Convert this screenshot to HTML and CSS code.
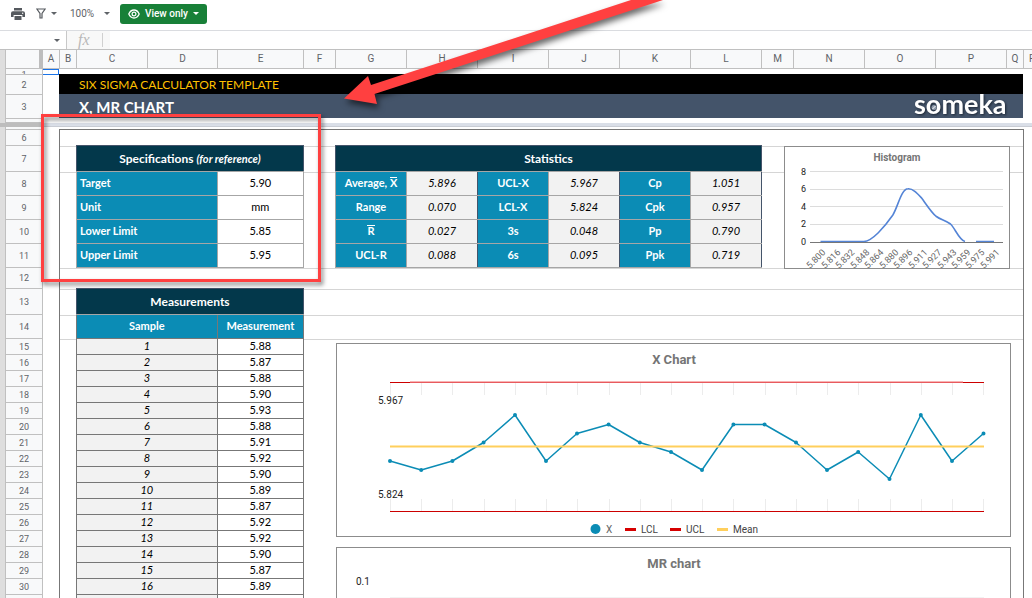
FILE: index.html
```html
<!DOCTYPE html>
<html lang="en">
<head>
<meta charset="utf-8">
<title>Six Sigma Calculator Template</title>
<link rel="stylesheet" href="styles.css">
</head>
<body>
<header class="toolbar">
  <button class="tool" type="button" aria-label="Print">
    <svg width="14" height="12" viewBox="0 0 14 12"><path fill="#55595e" d="M3 0h8v2.4H3zM2 3.2h10a2 2 0 0 1 2 2V9h-2.600V7H2.600v2H0V5.200a2 2 0 0 1 2-2zM3.500 8h7v4h-7z"/><circle cx="11.700" cy="5.200" r=".7" fill="#fff"/></svg>
  </button>
  <button class="tool tool-filter" type="button" aria-label="Filter">
    <svg width="10" height="11" viewBox="0 0 10 11"><path fill="none" stroke="#55595e" stroke-width="1.200" d="M.9 1h8.200L6 5.500V10H4V5.500z"/></svg>
    <span class="caret"></span>
  </button>
  <div class="zoom"><select class="zoom-select" aria-label="Zoom"><option>100%</option></select><span class="caret"></span></div>
  <button class="view-only" type="button">
    <svg width="12" height="10" viewBox="0 0 12 10"><path fill="none" stroke="#fff" stroke-width="1.300" d="M.8 5C2 2.300 3.800 1 6 1s4 1.300 5.200 4C10 7.700 8.200 9 6 9S2 7.700.8 5z"/><circle cx="6" cy="5" r="1.900" fill="none" stroke="#fff" stroke-width="1.200"/></svg>
    View only
    <span class="caret"></span>
  </button>
</header>
<div class="formula-bar">
  <div class="name-box"><input class="name-input" type="text" aria-label="Name box"><span class="caret"></span></div>
  <div class="fx-box"><label class="fx" for="formula">fx</label></div>
  <input class="formula-input" id="formula" type="text">
</div>

<main class="sheet">
  <div class="gutter"></div>
  <div class="corner"></div>
  <div class="col">A</div><div class="col">B</div><div class="col">C</div><div class="col">D</div><div class="col">E</div><div class="col">F</div><div class="col">G</div><div class="col">H</div><div class="col">I</div><div class="col">J</div><div class="col">K</div><div class="col">L</div><div class="col">M</div><div class="col">N</div><div class="col">O</div><div class="col">P</div><div class="col">Q</div><div class="col col-last">R</div>

  <div class="row row-clipped">1</div><div class="row">2</div><div class="row">3</div><div class="row"></div>
  <div class="row freeze-head"></div>
  <div class="row"></div><div class="row">6</div><div class="row">7</div><div class="row">8</div><div class="row">9</div><div class="row">10</div><div class="row">11</div><div class="row">12</div><div class="row">13</div><div class="row">14</div><div class="row">15</div><div class="row">16</div><div class="row">17</div><div class="row">18</div><div class="row">19</div><div class="row">20</div><div class="row">21</div><div class="row">22</div><div class="row">23</div><div class="row">24</div><div class="row">25</div><div class="row">26</div><div class="row">27</div><div class="row">28</div><div class="row">29</div><div class="row">30</div><div class="row"></div>

  <div class="selected-cell"></div>
  <div class="banner">
    <div class="banner-top">SIX SIGMA CALCULATOR TEMPLATE</div>
    <div class="banner-main">
      <h1 class="banner-title">X, MR CHART</h1>
      <svg class="brand" width="96" height="24" viewBox="0 0 96 24" role="img" aria-label="someka">
        <text x="4" y="20" class="brand-text">someka</text>
        <circle cx="24" cy="13.500" r="2.500" fill="#8f9bab"/><path d="M22.500 15l3-3" stroke="#fff" stroke-width="1"/>
      </svg>
    </div>
  </div>
  <div class="freeze-bar"></div>

  <div class="panel"></div>
  <div class="gridline line-7"></div><div class="gridline line-8"></div><div class="gridline line-12"></div><div class="gridline line-13"></div><div class="gridline line-14"></div><div class="gridline line-15"></div>

  <div class="area area-specs">
    <table class="grid-table specs">
      <colgroup><col class="w-label"><col></colgroup>
      <thead><tr><th colspan="2" scope="colgroup">Specifications <em class="note">(for reference)</em></th></tr></thead>
      <tbody>
        <tr><th scope="row">Target</th><td>5.90</td></tr>
        <tr><th scope="row">Unit</th><td>mm</td></tr>
        <tr><th scope="row">Lower Limit</th><td>5.85</td></tr>
        <tr><th scope="row">Upper Limit</th><td>5.95</td></tr>
      </tbody>
    </table>
  </div>

  <div class="area area-stats">
    <table class="grid-table stats">
      <thead><tr><th colspan="6" scope="colgroup">Statistics</th></tr></thead>
      <tbody>
        <tr><th scope="row">Average, <span class="bar">X</span></th><td>5.896</td><th scope="row">UCL-X</th><td>5.967</td><th scope="row">Cp</th><td>1.051</td></tr>
        <tr><th scope="row">Range</th><td>0.070</td><th scope="row">LCL-X</th><td>5.824</td><th scope="row">Cpk</th><td>0.957</td></tr>
        <tr><th scope="row"><span class="bar">R</span></th><td>0.027</td><th scope="row">3s</th><td>0.048</td><th scope="row">Pp</th><td>0.790</td></tr>
        <tr><th scope="row">UCL-R</th><td>0.088</td><th scope="row">6s</th><td>0.095</td><th scope="row">Ppk</th><td>0.719</td></tr>
      </tbody>
    </table>
  </div>

  <div class="area-histogram">
    <div class="chart">
    <svg class="plot" viewBox="0 0 224 121">
      <text class="chart-title small" x="112" y="14">Histogram</text>
      <g stroke="#dcdcdc"><path d="M25 24.500h193M25 42.500h193M25 59.500h193M25 77.500h193"/></g>
      <g class="tick end"><text x="21" y="28">8</text><text x="21" y="45">6</text><text x="21" y="63">4</text><text x="21" y="80">2</text><text x="21" y="98">0</text></g>
      <path fill="none" stroke="#5484d6" stroke-width="1.600" d="M35.500 94.500H78.800C83 94.500 89 90 93.300 85.750C98 81 103 75 107.700 68.250C113 60 116 42 123 41.800C128 41.500 132 46 136.600 51C141 57 146 65 151 69.250C156 73 160 73 165.500 77C170 81 174 93 180 94.500M191 94.500H209"/>
      <path stroke="#777" d="M25 95.500h193"/>
      <g class="tick end soft">
        <text transform="translate(41 106) rotate(-45)">5.800</text><text transform="translate(56 106) rotate(-45)">5.816</text><text transform="translate(70 106) rotate(-45)">5.832</text><text transform="translate(85 106) rotate(-45)">5.848</text><text transform="translate(99 106) rotate(-45)">5.864</text><text transform="translate(114 106) rotate(-45)">5.880</text><text transform="translate(128 106) rotate(-45)">5.896</text><text transform="translate(143 106) rotate(-45)">5.911</text><text transform="translate(157 106) rotate(-45)">5.927</text><text transform="translate(172 106) rotate(-45)">5.943</text><text transform="translate(186 106) rotate(-45)">5.959</text><text transform="translate(200 106) rotate(-45)">5.975</text><text transform="translate(215 106) rotate(-45)">5.991</text>
      </g>
    </svg>
    </div>
  </div>

  <div class="area area-measurements">
    <table class="grid-table measurements">
      <colgroup><col class="w-label"><col></colgroup>
      <thead>
        <tr><th colspan="2" scope="colgroup">Measurements</th></tr>
        <tr class="subhead"><th scope="col">Sample</th><th scope="col">Measurement</th></tr>
      </thead>
      <tbody>
        <tr><th scope="row">1</th><td>5.88</td></tr>
        <tr><th scope="row">2</th><td>5.87</td></tr>
        <tr><th scope="row">3</th><td>5.88</td></tr>
        <tr><th scope="row">4</th><td>5.90</td></tr>
        <tr><th scope="row">5</th><td>5.93</td></tr>
        <tr><th scope="row">6</th><td>5.88</td></tr>
        <tr><th scope="row">7</th><td>5.91</td></tr>
        <tr><th scope="row">8</th><td>5.92</td></tr>
        <tr><th scope="row">9</th><td>5.90</td></tr>
        <tr><th scope="row">10</th><td>5.89</td></tr>
        <tr><th scope="row">11</th><td>5.87</td></tr>
        <tr><th scope="row">12</th><td>5.92</td></tr>
        <tr><th scope="row">13</th><td>5.92</td></tr>
        <tr><th scope="row">14</th><td>5.90</td></tr>
        <tr><th scope="row">15</th><td>5.87</td></tr>
        <tr><th scope="row">16</th><td>5.89</td></tr>
        <tr><th scope="row"></th><td></td></tr>
      </tbody>
    </table>
  </div>

  <div class="area-charts">
    <div class="chart">
      <svg class="plot" viewBox="0 0 673 192">
        <text class="chart-title" x="337" y="20">X Chart</text>
        <path stroke="#ececec" d="M53.500 39v12M84.500 39v12M115.500 39v12M147.500 39v12M178.500 39v12M209.500 39v12M240.500 39v12M272.500 39v12M303.500 39v12M334.500 39v12M365.500 39v12M396.500 39v12M428.500 39v12M459.500 39v12M490.500 39v12M521.500 39v12M553.500 39v12M584.500 39v12M615.500 39v12M646.500 39v12M53.500 155v12M84.500 155v12M115.500 155v12M147.500 155v12M178.500 155v12M209.500 155v12M240.500 155v12M272.500 155v12M303.500 155v12M334.500 155v12M365.500 155v12M396.500 155v12M428.500 155v12M459.500 155v12M490.500 155v12M521.500 155v12M553.500 155v12M584.500 155v12M615.500 155v12M646.500 155v12"/>
        <path stroke="#f8b4b4" d="M73 37.500H626"/>
        <path stroke="#e85a5e" d="M53 38.500H647"/>
        <path stroke="#cc0000" d="M53 38.500H73M626 38.500H647M53 167.500H647"/>
        <g class="tick"><text x="41" y="60">5.967</text><text x="41" y="154">5.824</text></g>
        <path fill="none" stroke="#0b8cb5" stroke-width="1.500" stroke-linejoin="round" d="M53 117L84.200 126L115.400 117L146.600 98.500L178 71L209 117L240 89.500L271.600 80.500L302.800 98.500L334 108L365 126L396.400 80.500L427.600 80.500L459 98.500L490 126L521.200 108L552.500 135L583.800 71L615 117L646.500 89.500"/>
        <path fill="none" stroke="#0b8cb5" stroke-width="4" stroke-linecap="round" d="M53 117h0M84.200 126h0M115.400 117h0M146.600 98.500h0M178 71h0M209 117h0M240 89.500h0M271.600 80.500h0M302.800 98.500h0M334 108h0M365 126h0M396.400 80.500h0M427.600 80.500h0M459 98.500h0M490 126h0M521.200 108h0M552.500 135h0M583.800 71h0M615 117h0M646.500 89.500h0"/>
        <path stroke="#ffcf5c" stroke-width="2" d="M53 102.500H647"/>
        <circle cx="258.500" cy="185" r="5" fill="#0b8cb5"/>
        <path stroke="#d60000" stroke-width="3" d="M288 185.500h11M333 185.500h11"/>
        <path stroke="#ffcf5c" stroke-width="3" d="M380 185.500h11"/>
        <g class="tick legend"><text x="269" y="189" class="soft">X</text><text x="304" y="189">LCL</text><text x="349" y="189">UCL</text><text x="396" y="189">Mean</text></g>
      </svg>
    </div>
    <div class="chart">
      <svg class="plot" viewBox="0 0 673 192">
        <text class="chart-title" x="337" y="20">MR chart</text>
        <g class="tick"><text x="19" y="37">0.1</text></g>
        <path stroke="#f2f2f2" d="M53 49.500H647"/>
      </svg>
    </div>
  </div>
</main>

<div class="highlight-box"></div>
<svg class="arrow" width="340" height="120" viewBox="340 0 340 120" aria-hidden="true">
  <path fill="#ff4040" d="M344 98.500L368 76L371 85L631 0H663L374.500 94L377 104z"/>
</svg>
</body>
</html>
```
FILE: styles.css
```css
* { box-sizing: border-box; }

body {
  position: relative;
  display: flex;
  flex-direction: column;
  height: 100vh;
  margin: 0;
  overflow: hidden;
  background: #fff;
  color: #000;
  font: 11px/14px Lato, Carlito, Calibri, sans-serif;
}

button, input, select {
  margin: 0;
  padding: 0;
  border: 0;
  background: none;
  font: inherit;
  color: inherit;
}

/* Toolbar */
.toolbar {
  display: flex;
  flex: none;
  align-items: center;
  height: 31px;
  padding: 0 0 3px 11px;
  border-bottom: 1px solid #dadce0;
  color: #5f6368;
  font: 500 10px/14px Roboto, sans-serif;
}
.tool { display: flex; align-items: center; gap: 5px; }
.tool-filter { margin-left: 11px; }
.caret {
  flex: none;
  width: 0;
  height: 0;
  border: 3px solid transparent;
  border-top-color: #5f6368;
  border-bottom: 0;
}
.zoom { display: flex; align-items: center; gap: 8px; margin-left: 13px; font-weight: 400; }
.zoom-select { width: 26px; appearance: none; }
.view-only {
  display: flex;
  align-items: center;
  gap: 5px;
  height: 20px;
  margin-left: 10px;
  padding: 0 8px;
  border-radius: 3px;
  background: #188038;
  color: #fff;
}
.view-only .caret { border-top-color: #fff; }

/* Formula bar */
.formula-bar {
  display: flex;
  flex: none;
  height: 19px;
  border-bottom: 1px solid #c0c0c0;
}
.name-box {
  display: flex;
  align-items: center;
  width: 67px;
  padding-right: 6px;
  border-right: 1px solid #c8c8c8;
}
.name-input { flex: 1; min-width: 0; }
.fx-box { width: 43px; padding: 2px 7px 2px 0; background: #f8f8f8; }
.fx {
  display: block;
  padding-left: 11px;
  border-right: 1px solid #d0d0d0;
  color: #b8b8b8;
  font: italic 16px/14px "Liberation Serif", serif;
}
.formula-input { flex: 1; min-width: 0; }

/* Spreadsheet grid */
.sheet {
  display: grid;
  flex: 1;
  min-height: 0;
  overflow: hidden;
  grid-template-columns:
    5px 38px
    minmax(0, 17fr) minmax(0, 17fr) minmax(0, 71fr) minmax(0, 70fr) minmax(0, 86fr) minmax(0, 32fr)
    repeat(6, minmax(0, 71fr)) minmax(0, 32fr) repeat(3, minmax(0, 71fr)) minmax(0, 17fr) minmax(0, 8fr);
  grid-template-rows:
    19px 6px 20px 24px 4px 4px 3px 16px 26px repeat(4, 24px) 21px 26px 24px repeat(17, 16px);
}
.gutter { grid-area: 1 / 1 / -1 / 2; background: #dedede; }
.corner {
  grid-area: 1 / 2;
  border-right: 4px solid #bdbdbd;
  border-bottom: 1px solid #c0c0c0;
  border-left: 1px solid #c0c0c0;
  background: #f8f9fa;
}
.col, .row {
  display: flex;
  align-items: center;
  justify-content: center;
  overflow: hidden;
  border-right: 1px solid #c0c0c0;
  border-bottom: 1px solid #c0c0c0;
  background: #f8f9fa;
  color: #5f6368;
  font: 10px/10px Roboto, sans-serif;
}
.col { grid-row: 1; }
.col-last { justify-content: flex-start; padding-left: 5px; border-right: 0; }
.row { grid-column: 2; border-left: 1px solid #c0c0c0; font-size: 9px; }
.row-clipped { align-items: flex-start; padding-top: 1px; }
.freeze-head { grid-area: 6 / 1 / 7 / 3; border: 0; background: #bdbdbd; }
.freeze-bar { grid-area: 6 / 3 / 7 / -1; background: #dadfe8; border-bottom: 1px solid #c8ccd4; }
.selected-cell { grid-area: 2 / 3; margin-right: 1px; border: 1px solid #1a73e8; border-left: 0; }

.banner {
  grid-area: 2 / 4 / 5 / 20;
  align-self: end;
  margin: 0 1px 1px -1px;
  color: #fff;
}
.banner-top {
  padding-left: 20px;
  background: #000;
  color: #ffc000;
  font-size: 12px;
  line-height: 21px;
  height: 20px;
}
.banner-main {
  display: flex;
  align-items: center;
  justify-content: space-between;
  height: 24px;
  padding: 0 17px 0 20px;
  background: #44546a;
}
.banner-title { margin: 0; padding-top: 2px; font-size: 15px; line-height: 22px; font-weight: 700; }
.brand { filter: drop-shadow(1px 1px 1px #1d2735); }
.brand-text { fill: #fff; font: 700 27px Lato, sans-serif; }

.panel {
  grid-area: 7 / 4 / -1 / 20;
  margin: 2px 0 0 -1px;
  border: 1px solid #777;
  border-bottom: 0;
}
.gridline { grid-column: 4 / 20; height: 1px; margin-right: 1px; background: #d5d5d5; }
.line-7 { grid-row: 9; }
.line-8 { grid-row: 10; }
.line-12 { grid-row: 14; }
.line-13 { grid-row: 15; }
.line-14 { grid-row: 16; }
.line-15 { grid-row: 17; }

/* Tables start on the preceding cell's border line */
.area { margin: -1px 0 0 -1px; }
.area-specs { grid-area: 9 / 5 / 14 / 8; }
.area-stats { grid-area: 9 / 9 / 14 / 15; }
.area-measurements { grid-area: 15 / 5 / -1 / 8; }
.grid-table {
  width: 100%;
  border-collapse: collapse;
  table-layout: fixed;
  background: #fff;
  border: 1px solid #44546a;
  text-align: center;
}
.w-label { width: 62%; }
.grid-table th, .grid-table td {
  height: 24px;
  padding: 0 0 2px;
  border: 1px solid #a6a6a6;
  line-height: 13px;
}
.grid-table th { background: #0b8cb5; color: #fff; font-weight: 700; }
.grid-table thead tr:first-child th {
  height: 26px;
  padding: 0;
  border-color: #44546a #44546a #a6a6a6;
  background: #03384b;
  font-size: 12px;
}
.note { font-size: 11px; }
.specs tbody th { padding-left: 3px; text-align: left; }
.stats td { background: #f2f2f2; font-style: italic; }
.stats td:nth-child(even) { border-right-color: #44546a; }
.bar { display: inline-block; border-top: 1px solid; line-height: 9px; }
.measurements tbody th, .measurements tbody td, .measurements .subhead th { border-color: #777; }
.measurements tbody th, .measurements tbody td { height: 16px; }
.measurements tbody th { background: #f2f2f2; color: #000; font-weight: 400; font-style: italic; }

/* Charts */
.area-histogram { grid-area: 9 / 15 / 14 / 20; padding: 0 14px 0 22px; }
.area-charts {
  display: flex;
  flex-direction: column;
  gap: 10px;
  grid-area: 17 / 9 / -1 / 20;
  padding: 4px 13px 0 0;
}
.chart { border: 1px solid #8c8c8c; background: #fff; }
.area-histogram, .area-charts, .area { position: relative; }
.plot { display: block; width: 100%; }
.chart-title { fill: #757575; font: 700 13px Roboto, sans-serif; text-anchor: middle; }
.chart-title.small { font-size: 10px; }
.tick { fill: #222; font: 10px Roboto, sans-serif; }
.tick.end { text-anchor: end; font-size: 9px; }
.tick.legend { fill: #444; }
.soft, .tick.soft { fill: #666; }

/* Annotation overlay */
.highlight-box {
  position: absolute;
  top: 114px;
  left: 41px;
  width: 280px;
  height: 168px;
  border: 3px solid #ff4040;
  filter: drop-shadow(2px 3px 2px rgba(0, 0, 0, .5));
}
.arrow {
  position: absolute;
  top: 0;
  left: 340px;
  filter: drop-shadow(2px 4px 3px rgba(0, 0, 0, .6));
}
```
